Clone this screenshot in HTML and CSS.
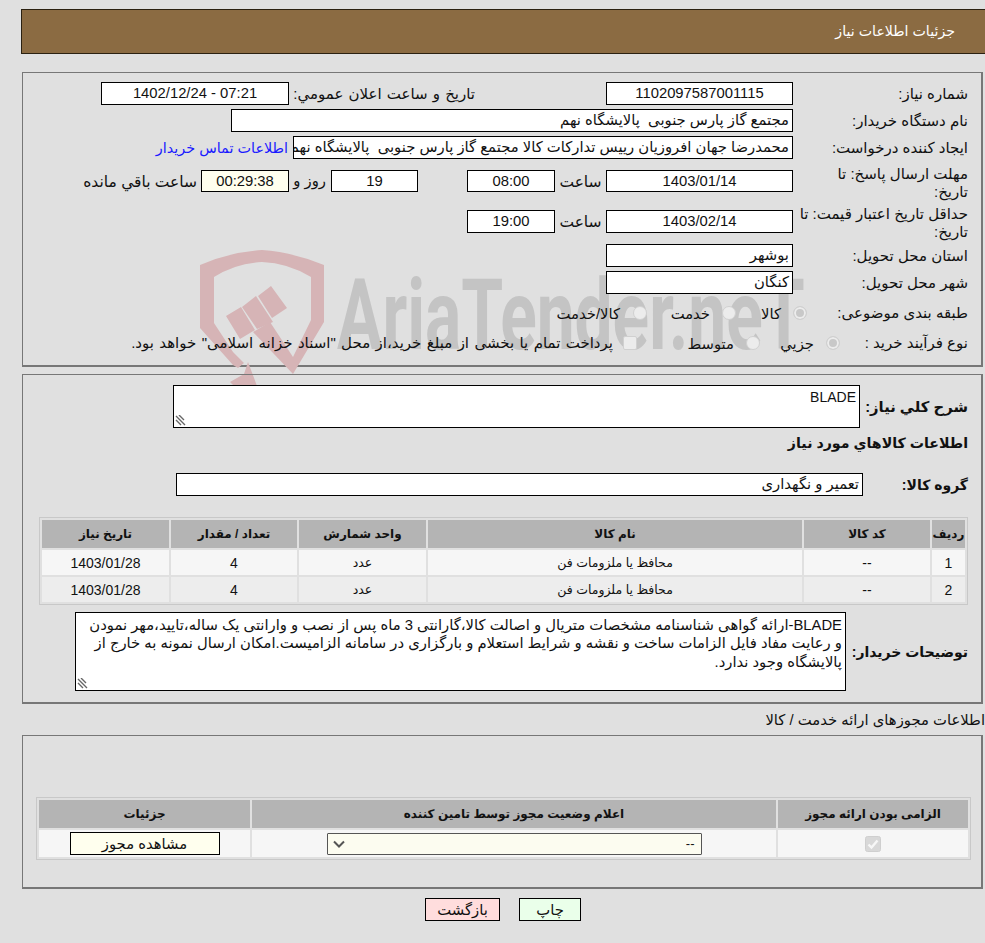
FILE: index.html

```html
<!DOCTYPE html>
<html lang="fa" dir="rtl">
<head>
    <meta charset="UTF-8">
    <title>جزئیات اطلاعات نیاز</title>
    <link rel="stylesheet" href="styles.css">
</head>
<body>

<div class="page-title">جزئیات اطلاعات نیاز</div>

<section class="panel panel-main">
    <div class="watermark">
        <svg class="wm-shield" width="126" height="138" viewBox="0 0 126 138">
            <path d="M0 15 Q30 2 62 0 Q92 2 124 15 V72 L93 124 L53 82 L70 72 L93 107 L111 70 V27 Q88 13 62 12 Q36 13 14 27 V73 L33 102 L44 113 L38 118 L33 115 L0 78 Z" fill="#d6b4b6"/>
            <path d="M48 112 L57 136 L34 136 L30 132 L44 124 Z" fill="#d6b4b6"/>
            <path d="M26 66 L41 57 L55 80 L40 89 Z M42 57 L56 46 L73 72 L57 79 Z M58 46 L71 36 L87 58 L72 68 Z" fill="#d6b4b6"/>
        </svg>
        <span class="wm-text">AriaTender.neT</span>
    </div>

    <div class="row">
        <label class="lbl">شماره نیاز:</label>
        <div class="box box-md ctr">1102097587001115</div>
        <label class="lbl-announce">تاریخ و ساعت اعلان عمومي:</label>
        <div class="box box-announce ctr ltr">1402/12/24 - 07:21</div>
    </div>
    <div class="row">
        <label class="lbl">نام دستگاه خریدار:</label>
        <div class="box box-buyer">مجتمع گاز پارس جنوبی  پالایشگاه نهم</div>
    </div>
    <div class="row">
        <label class="lbl">ایجاد کننده درخواست:</label>
        <div class="box box-creator">محمدرضا جهان افروزیان رییس تدارکات کالا مجتمع گاز پارس جنوبی  پالایشگاه نهم</div>
        <a class="contact-link" href="#">اطلاعات تماس خریدار</a>
    </div>
    <div class="row row-tall">
        <label class="lbl">مهلت ارسال پاسخ: تا<br>تاریخ:</label>
        <div class="box box-md box-short ctr">1403/01/14</div>
        <span class="lbl-time">ساعت</span>
        <div class="box box-sm box-short ctr">08:00</div>
        <span class="gap-day"></span>
        <div class="box box-days box-short ctr">19</div>
        <span class="lbl-day">روز و</span>
        <div class="box box-timer box-short ctr">00:29:38</div>
        <span class="lbl-left">ساعت باقي مانده</span>
    </div>
    <div class="row row-tall">
        <label class="lbl">حداقل تاریخ اعتبار قیمت: تا<br>تاریخ:</label>
        <div class="box box-md ctr">1403/02/14</div>
        <span class="lbl-time">ساعت</span>
        <div class="box box-sm ctr">19:00</div>
    </div>
    <div class="row row-place">
        <label class="lbl">استان محل تحویل:</label>
        <div class="box box-md">بوشهر</div>
    </div>
    <div class="row">
        <label class="lbl">شهر محل تحویل:</label>
        <div class="box box-md">کنگان</div>
    </div>
    <div class="row row-radio row-subject">
        <label class="lbl">طبقه بندی موضوعی:</label>
        <span class="radio checked"></span><span class="opt opt-kala">کالا</span>
        <span class="radio"></span><span class="opt opt-service">خدمت</span>
        <span class="radio radio-wide"></span><span class="opt">کالا/خدمت</span>
    </div>
    <div class="row row-radio row-process">
        <label class="lbl">نوع فرآیند خرید :</label>
        <span class="radio checked"></span><span class="opt opt-small">جزیي</span>
        <span class="radio"></span><span class="opt opt-mid">متوسط</span>
        <span class="check-blank"></span><span class="opt opt-long">پرداخت تمام یا بخشی از مبلغ خرید،از محل "اسناد خزانه اسلامی" خواهد بود.</span>
    </div>
</section>

<section class="panel panel-items">
    <div class="row">
        <label class="lbl-bold lbl-desc">شرح كلي نیاز:</label>
        <div class="box area area-short">BLADE
            <svg class="grip" width="11" height="11" viewBox="0 0 11 11"><path d="M1 1 L10 10 M1 5 L6 10 M4 0 L9 5" stroke="#666" stroke-width="1.4"/></svg>
        </div>
    </div>
    <h3 class="items-title">اطلاعات كالاهاي مورد نیاز</h3>
    <div class="row row-group">
        <label class="lbl-bold lbl-group">گروه کالا:</label>
        <div class="box box-group">تعمیر و نگهداری</div>
    </div>

    <table class="grid grid-items">
        <tr>
            <th class="c-no">ردیف</th><th class="c-code">کد کالا</th><th class="c-name">نام کالا</th>
            <th class="c-unit">واحد شمارش</th><th class="c-qty">تعداد / مقدار</th><th>تاریخ نیاز</th>
        </tr>
        <tr>
            <td>1</td><td>--</td><td class="td-text">محافظ یا ملزومات فن</td><td class="td-text">عدد</td><td>4</td><td>1403/01/28</td>
        </tr>
        <tr class="alt">
            <td>2</td><td>--</td><td class="td-text">محافظ یا ملزومات فن</td><td class="td-text">عدد</td><td>4</td><td>1403/01/28</td>
        </tr>
    </table>

    <div class="row row-notes">
        <label class="lbl-bold lbl-notes">توضیحات خریدار:</label>
        <div class="box area area-tall">BLADE-ارائه گواهی شناسنامه مشخصات متریال و اصالت کالا،گارانتی 3 ماه پس از نصب و وارانتی یک ساله،تایید،مهر نمودن<br>و رعایت مفاد فایل الزامات ساخت و نقشه و شرایط استعلام و بارگزاری در سامانه الزامیست.امکان ارسال نمونه به خارج از<br>پالایشگاه وجود ندارد.
            <svg class="grip" width="11" height="11" viewBox="0 0 11 11"><path d="M1 1 L10 10 M1 5 L6 10 M4 0 L9 5" stroke="#666" stroke-width="1.4"/></svg>
        </div>
    </div>
</section>

<div class="license-title">اطلاعات مجوزهای ارائه خدمت / کالا</div>

<section class="panel panel-license">
    <table class="grid grid-license">
        <tr>
            <th class="c-req">الزامی بودن ارائه مجوز</th>
            <th class="c-status">اعلام وضعیت مجوز توسط تامین کننده</th>
            <th>جزئیات</th>
        </tr>
        <tr>
            <td>
                <svg class="tick" width="16" height="16" viewBox="0 0 16 16">
                    <rect x="0.5" y="0.5" width="15" height="15" rx="2" fill="#d8d8d8" stroke="#cfcfcf"/>
                    <path d="M3.5 8.5 L6.5 11.5 L12.5 4.5" fill="none" stroke="#f7f7f7" stroke-width="2.4"/>
                </svg>
            </td>
            <td>
                <div class="fake-select">
                    <span>--</span>
                    <svg width="12" height="8" viewBox="0 0 12 8"><path d="M1 1.5 L6 6.5 L11 1.5" fill="none" stroke="#555" stroke-width="2"/></svg>
                </div>
            </td>
            <td><button class="btn btn-view">مشاهده مجوز</button></td>
        </tr>
    </table>
</section>

<div class="actions">
    <button class="btn btn-print">چاپ</button>
    <button class="btn btn-back">بازگشت</button>
</div>

</body>
</html>
```

FILE: styles.css

```css
body {
    font-family: "Liberation Sans", "DejaVu Sans", sans-serif;
    font-size: 14.8px;
    background-color: #e0e0e0;
    color: #111;
    margin: 0;
    height: 943px;
    overflow: hidden;
}

.page-title {
    margin: 9px 0 0 21px;
    height: 43px;
    line-height: 43px;
    padding-right: 30px;
    background-color: #8b6b42;
    border-top: 1px solid #2b2111;
    border-bottom: 1px solid #2b2111;
    border-left: 1px solid #2b2111;
    color: white;
    font-size: 14.2px;
}

.panel {
    position: relative;
    margin: 0 2px 0 0;
    margin-left: 22px;
    border: 1px solid #777;
    border-bottom-width: 2px;
    border-right-width: 2px;
    box-sizing: border-box;
}

.panel-main {
    margin-top: 18px;
    height: 295px;
    padding: 7px 13px 0 0;
}

.panel-items {
    margin-top: 7px;
    height: 330px;
    padding: 10px 13px 0 0;
}

.panel-license {
    margin-top: 3px;
    height: 154px;
    padding: 61px 10px 0 0;
}

/* watermark sits behind the form */
.watermark {
    position: absolute;
    left: 177px;
    top: 177px;
    width: 620px;
    height: 140px;
}

.wm-shield {
    position: absolute;
    left: 0;
    top: 0;
}

.wm-text {
    position: absolute;
    left: 137px;
    top: 11px;
    direction: ltr;
    font-family: Roboto, sans-serif;
    font-weight: bold;
    font-size: 98px;
    line-height: 110px;
    color: #c4c4c4;
    white-space: nowrap;
    transform: scaleX(0.69);
    transform-origin: left center;
}

.row {
    position: relative;
    display: flex;
    align-items: center;
    min-height: 27px;
}

.row-tall {
    height: 40px;
    align-items: flex-start;
}

.row-tall > * {
    margin-top: 9px;
}

.row-tall .lbl {
    margin-top: 4px;
}

.row-place {
    margin-top: 1px;
}

.row-radio {
    height: 30px;
}

.row-subject {
    margin-top: 2px;
}

.lbl {
    width: 175px;
    flex: none;
    font-size: 15px;
    line-height: 18px;
    white-space: nowrap;
}

.row-subject .lbl {
    width: 161px;
}

.row-process .lbl {
    width: 128px;
}

.box {
    box-sizing: border-box;
    border: 1px solid #000;
    background-color: white;
    height: 23px;
    line-height: 21px;
    padding: 0 3px;
    white-space: pre;
    overflow: hidden;
    flex: none;
}

.box-short {
    height: 22px;
    line-height: 20px;
}

.ctr {
    text-align: center;
}

.ltr {
    direction: ltr;
}

.box-md {
    width: 187px;
}

.box-announce {
    width: 188px;
}

.box-sm {
    width: 88px;
}

.box-days {
    width: 87px;
}

.box-buyer {
    width: 562px;
}

.box-creator {
    width: 500px;
}

.box-timer {
    width: 88px;
    background-color: #ffffee;
}

.lbl-announce {
    width: 317px;
    padding-right: 131px;
    box-sizing: border-box;
    white-space: nowrap;
    font-size: 15px;
    word-spacing: 1px;
}

.contact-link {
    color: #1a1aff;
    text-decoration: none;
    margin-right: 5px;
    white-space: nowrap;
    font-size: 14.4px;
}

.lbl-time {
    width: 51px;
    text-align: center;
    line-height: 23px;
    font-size: 15.5px;
}

.gap-day {
    width: 49px;
}

.lbl-day {
    box-sizing: border-box;
    width: 42px;
    padding-right: 5px;
    line-height: 23px;
    white-space: nowrap;
}

.lbl-left {
    margin-right: 4px;
    line-height: 23px;
    white-space: nowrap;
    font-size: 15.5px;
}

.radio {
    box-sizing: border-box;
    flex: none;
    width: 14px;
    height: 14px;
    border-radius: 50%;
    background-color: #ececec;
    border: 1px solid #d0d0d0;
    margin-left: 12px;
}

.radio.checked {
    background-color: #c8c8c8;
    box-shadow: inset 0 0 0 2px #ececec;
}

.radio-wide {
    margin-left: 13px;
}

.check-blank {
    box-sizing: border-box;
    flex: none;
    width: 14px;
    height: 14px;
    border-radius: 2px;
    background-color: #ececec;
    border: 1px solid #d0d0d0;
    margin-left: 10px;
}

.opt {
    white-space: nowrap;
    flex: none;
}

.opt-kala { width: 45px; }
.opt-service { width: 63px; }
.opt-small { width: 54px; }
.opt-mid { width: 97px; }

.opt-long {
    font-size: 15px;
    word-spacing: 1.2px;
}

.lbl-bold {
    font-weight: bold;
    font-size: 14px;
    flex: none;
}

.lbl-desc {
    width: 108px;
    font-size: 14.8px;
}

.lbl-group {
    width: 105px;
}

.area {
    position: relative;
    white-space: normal;
    line-height: 18.3px;
}

.area-short {
    width: 687px;
    height: 43px;
    padding-top: 2px;
    font-size: 14px;
}

.area-tall {
    width: 771px;
    height: 79px;
    padding: 3px;
    font-size: 14.8px;
}

.grip {
    position: absolute;
    left: 1px;
    bottom: 1px;
}

.items-title {
    font-size: 14.2px;
    font-weight: bold;
    margin: 0;
    height: 30px;
    line-height: 30px;
}

.row-group {
    margin-top: 13px;
}

.box-group {
    width: 687px;
}

.grid {
    border-collapse: separate;
    border-spacing: 2px;
    border: 1px solid #c8c8c8;
    table-layout: fixed;
    font-size: 14px;
}

.grid th {
    background-color: #b4b4b4;
    height: 28px;
    font-size: 12px;
    font-weight: bold;
    padding: 0;
}

.grid td {
    background-color: #f6f6f6;
    height: 25px;
    text-align: center;
    padding: 0;
}

.grid .td-text {
    font-size: 12.5px;
}

.grid .alt td {
    background-color: #ededed;
}

.grid-items {
    margin: 19px 0 0 0;
    width: 929px;
}

.c-no { width: 33px; }
.c-code { width: 126px; }
.c-name { width: 374px; }
.c-unit { width: 127px; }
.c-qty { width: 126px; }

.row-notes {
    margin-top: 7px;
}

.lbl-notes {
    width: 122px;
}

.license-title {
    height: 24px;
    line-height: 24px;
    margin-top: 4px;
    white-space: nowrap;
}

.grid-license {
    width: 935px;
}

.grid-license td {
    height: 27px;
}

.c-req { width: 190px; }
.c-status { width: 524px; }

.tick {
    display: block;
    margin: 0 auto;
}

.fake-select {
    box-sizing: border-box;
    width: 375px;
    height: 22px;
    margin: 0 auto;
    border: 1px solid #555;
    border-radius: 1px;
    background-color: #fcfcf0;
    display: flex;
    justify-content: space-between;
    align-items: center;
    padding: 0 6px 0 5px;
    font-size: 13px;
}

.btn {
    font-family: "Liberation Sans", "DejaVu Sans", sans-serif;
    font-size: 14.8px;
    box-sizing: border-box;
    height: 23px;
    border: 1px solid #000;
    padding: 0;
    color: #111;
}

.btn-view {
    width: 150px;
    background-color: #ffffee;
    display: block;
    margin: 0 auto;
}

.actions {
    display: flex;
    justify-content: center;
    gap: 19px;
    margin-top: 9px;
    padding-left: 21px;
}

.btn-print {
    width: 62px;
    background-color: #eaffea;
}

.btn-back {
    width: 75px;
    background-color: #ffdddd;
}
```
